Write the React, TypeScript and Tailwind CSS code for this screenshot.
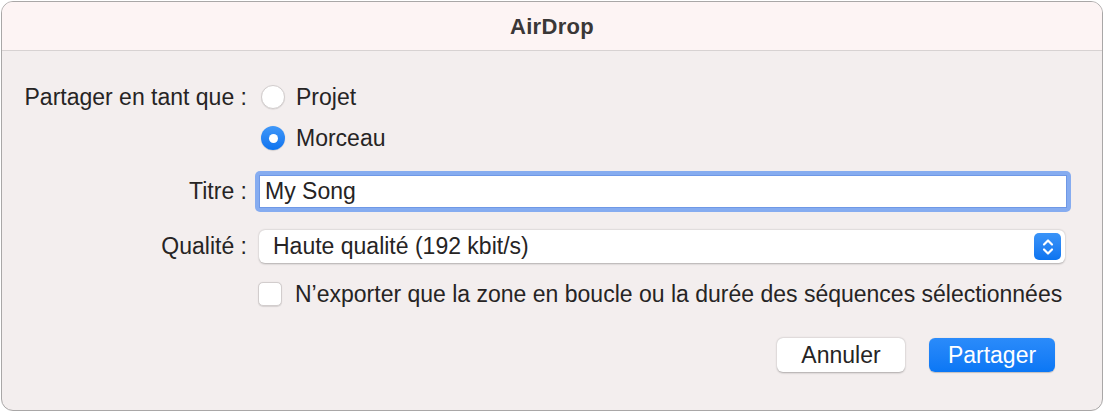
import React from "react";

const font = { fontFamily: '"Liberation Sans", Arial, sans-serif' };

function Radio({ checked }: { checked?: boolean }) {
  if (checked) {
    return (
      <div className="w-[24px] h-[24px] rounded-full bg-gradient-to-b from-[#3f97f8] to-[#0a73ef] shadow-[0_0.5px_1px_rgba(0,0,0,0.25)] flex items-center justify-center">
        <div className="w-[9px] h-[9px] rounded-full bg-white" />
      </div>
    );
  }
  return (
    <div className="w-[24px] h-[24px] rounded-full bg-white border border-[#d2cdcd] shadow-[0_0.5px_1px_rgba(0,0,0,0.12)]" />
  );
}

export default function App() {
  return (
    <div className="w-[1104px] h-[412px] bg-white p-px" style={font}>
      <div className="w-full h-full rounded-[12px] border border-[#a9a7a7] overflow-hidden flex flex-col bg-[#f3eeee] text-[#262424]">
        <div className="h-[49px] shrink-0 bg-[#fdf4f4] border-b border-[#d7d2d2] flex items-center justify-center">
          <span className="text-[22px] font-bold tracking-[0.3px] text-[#3a3737] mt-[1px]">AirDrop</span>
        </div>
        <div className="flex flex-col text-[23px] leading-none">
          {/* Row 1 */}
          <div className="flex items-center h-[30px] mt-[31px]">
            <div className="w-[245px] text-right">Partager en tant que :</div>
            <div className="ml-[14px] flex items-center gap-[11px]">
              <Radio />
              <span>Projet</span>
            </div>
          </div>
          {/* Row 2 */}
          <div className="flex items-center h-[30px] mt-[11px]">
            <div className="w-[245px]" />
            <div className="ml-[14px] flex items-center gap-[11px]">
              <Radio checked />
              <span>Morceau</span>
            </div>
          </div>
          {/* Row 3 */}
          <div className="flex items-center h-[41px] mt-[18px]">
            <div className="w-[245px] text-right">Titre :</div>
            <div className="ml-[8px] w-[816px] h-[41px] rounded-[5px] bg-[#86acf0] p-[4px]">
              <div className="w-full h-full bg-white border border-[#6f98e6] flex items-center pl-[5px]">
                <span>My Song</span>
              </div>
            </div>
          </div>
          {/* Row 4 */}
          <div className="flex items-center h-[33px] mt-[18px]">
            <div className="w-[245px] text-right">Qualité :</div>
            <div className="ml-[12px] w-[806px] h-[33px] rounded-[6px] bg-white shadow-[0_0.5px_2px_rgba(0,0,0,0.28)] flex items-center justify-between pl-[14px] pr-[4px]">
              <span>Haute qualité (192 kbit/s)</span>
              <div className="w-[27px] h-[27px] rounded-[5px] bg-gradient-to-b from-[#3a94f8] to-[#0b74f0] flex items-center justify-center">
                <svg width="14" height="20" viewBox="0 0 14 20" fill="none" stroke="white" strokeWidth="2.2" strokeLinecap="round" strokeLinejoin="round">
                  <path d="M3 7.5 L7 3.5 L11 7.5" />
                  <path d="M3 12.5 L7 16.5 L11 12.5" />
                </svg>
              </div>
            </div>
          </div>
          {/* Row 5 */}
          <div className="flex items-center h-[24px] mt-[19px]">
            <div className="w-[245px]" />
            <div className="ml-[11px] flex items-center gap-[13px]">
              <div className="w-[24px] h-[24px] rounded-[5px] bg-white border border-[#d2cdcd] shadow-[0_0.5px_1px_rgba(0,0,0,0.12)]" />
              <span>N’exporter que la zone en boucle ou la durée des séquences sélectionnées</span>
            </div>
          </div>
          {/* Buttons */}
          <div className="flex justify-end gap-[24px] mt-[32px] pr-[47px]">
            <div className="w-[128px] h-[34px] rounded-[6px] bg-white shadow-[0_0.5px_2px_rgba(0,0,0,0.3)] flex items-center justify-center">
              Annuler
            </div>
            <div className="w-[126px] h-[34px] rounded-[6px] bg-gradient-to-b from-[#2a8bfa] to-[#0a77f5] text-white flex items-center justify-center shadow-[0_0.5px_1px_rgba(0,0,0,0.2)]">
              Partager
            </div>
          </div>
        </div>
      </div>
    </div>
  );
}
